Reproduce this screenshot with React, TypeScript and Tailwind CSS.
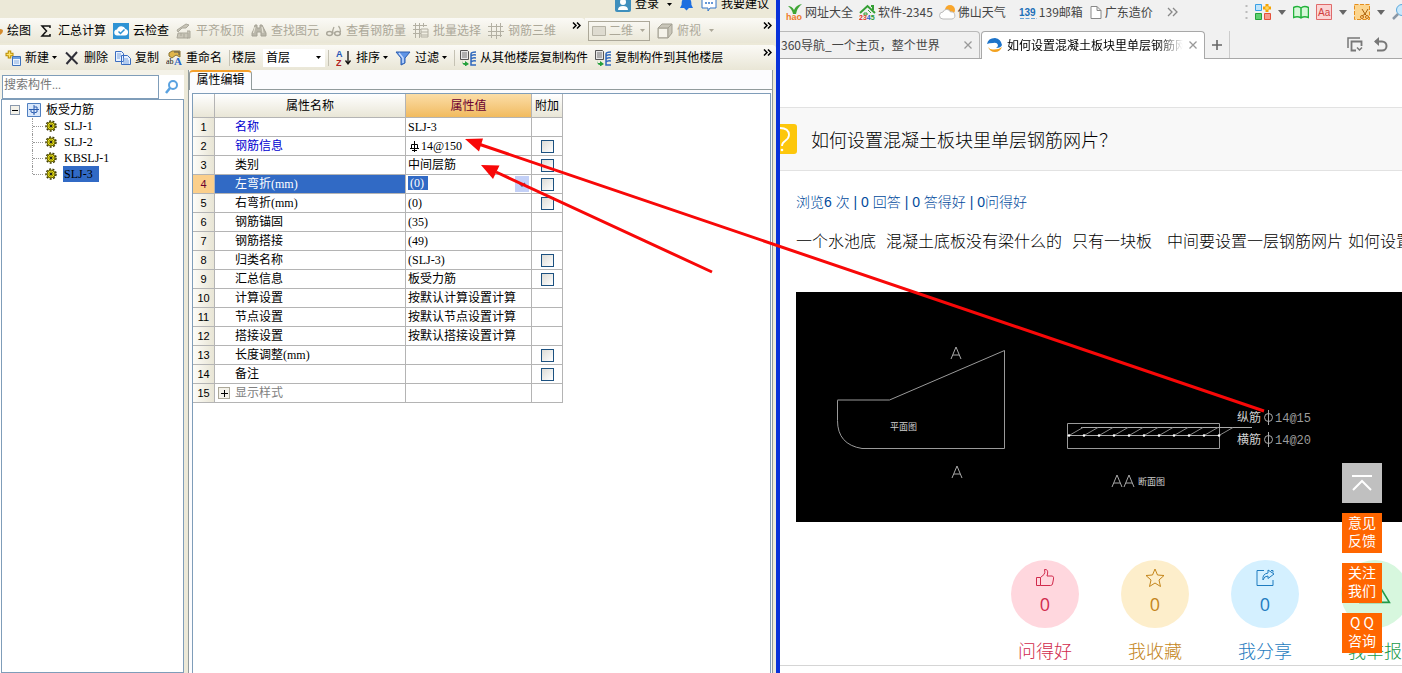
import type { ReactNode } from "react"
import { clsx } from "clsx"

type IconProps = { children: ReactNode; className?: string; box?: string }

/** 16px icon frame shared by all toolbar drawings. */
function Icon({ children, className, box = "0 0 16 16" }: IconProps) {
  return (
    <svg viewBox={box} className={clsx("shrink-0", className ?? "size-4")} fill="none" aria-hidden="true">
      {children}
    </svg>
  )
}

function Caret({ className }: { className?: string }) {
  return (
    <Icon box="0 0 5 3" className={className ?? "h-[3px] w-[5px]"}>
      <path d="M0 0h5L2.500 3z" fill="currentColor" />
    </Icon>
  )
}

const icons = {
  sigma: (
    <Icon>
      <path d="M12 5V3H4l4.500 5L4 13h8v-2" stroke="#111" strokeWidth="1.500" />
    </Icon>
  ),
  cloud: (
    <Icon>
      <path d="M0 0h16v16H0z" fill="#2e93d4" />
      <path d="M4.500 12.500a3 3 0 0 1-.5-6 4.500 4.500 0 0 1 8.500-.5 3.300 3.300 0 0 1-.5 6.500z" fill="#fff" />
      <path d="m5.500 8.500 2 2 4-4" stroke="#2e93d4" strokeWidth="1.500" />
    </Icon>
  ),
  slab: (
    <Icon>
      <path d="m1 7 9-6 3 1-3 3H6L2 9zM2 10h10v5H1zM5 10v3M8 11v4M11 8h3v7h-3" fill="#c9c6b8" stroke="#aaa79a" />
    </Icon>
  ),
  binoculars: (
    <Icon>
      <path d="M4 2h2v3h3V2h2l2 4 2 4v3h-5V9H6v4H1v-3l2-4z" fill="#bab7aa" stroke="#a5a295" />
      <path d="M4 4 2.500 10M11 4l1 6" stroke="#ece9dc" />
    </Icon>
  ),
  glasses: (
    <Icon>
      <path d="M6.500 10q0-3 1.500-6M14.500 9q0-4-2-6" stroke="#aaa79a" strokeWidth="1.300" />
      <ellipse cx="3.500" cy="10.500" rx="2.800" ry="2" stroke="#aaa79a" strokeWidth="1.500" />
      <ellipse cx="11.500" cy="10.500" rx="2.800" ry="2" stroke="#aaa79a" strokeWidth="1.500" />
      <path d="M6.500 10h2" stroke="#aaa79a" />
    </Icon>
  ),
  batch: (
    <Icon>
      <path d="M0 2.500h14M0 6.500h8M0 10.500h8M2.500 0v15M6.500 0v15M10.500 0v4M8 6h7v8H8zM8 9h7M8 12h7" stroke="#b3b0a3" />
    </Icon>
  ),
  mesh: (
    <Icon>
      <path d="M0 3.500h15M0 8.500h16M0 12.500h14M3.500 0v15M8.500 1v15M12.500 0v14" stroke="#b3b0a3" />
    </Icon>
  ),
  cube: (
    <Icon>
      <path d="m1 5 4-4h10v9l-4 5H1z" fill="#c9c6b9" stroke="#a29f92" />
      <path d="M1 5h10v10M11 5l4-4" stroke="#a29f92" />
      <path d="M2 6h8v8H2z" fill="#f5f3ea" />
    </Icon>
  ),
  create: (
    <Icon>
      <path d="M4.500.5v8M.5 4.500h8" stroke="#b78a00" strokeWidth="3.500" />
      <path d="M4.500 1.500v6M1.500 4.500h6" stroke="#ffe36a" strokeWidth="1.500" />
      <path d="M7.500 6.500h8v9h-8z" fill="#eaf3ff" stroke="#3d72bd" />
      <path d="M8 7h7v2H8z" fill="#6d9fe0" />
      <path d="M9 11h5M9 13h5" stroke="#8aaede" />
    </Icon>
  ),
  remove: (
    <Icon>
      <path d="M2 2.500 13.500 14M13 2 2.500 14" stroke="#2f2f38" strokeWidth="2" />
    </Icon>
  ),
  copy: (
    <Icon>
      <path d="M.5 1.500h6l2 2v8h-8zM6.500 5.500h6l3 3v6h-9z" fill="#e8f1ff" stroke="#3a6dc0" />
      <path d="M2 4h4M2 6h4M2 8h3M8 9h5M8 11h6M8 13h6" stroke="#7aa3dc" />
    </Icon>
  ),
  rename: (
    <Icon>
      <path d="m3 3 3-2h8v6l-4-2-4 3-3-2z" fill="#e0b54a" stroke="#8a7434" />
      <path d="M8 2h5v3" stroke="#555" />
      <text x="0" y="14" fontSize="8" fill="#111" className="font-['Liberation_Serif',serif]">ab</text>
      <text x="8" y="15" fontSize="11" fontWeight="700" fill="#2a66c8" className="font-['Liberation_Serif',serif]">A</text>
    </Icon>
  ),
  sort: (
    <Icon>
      <text x="0" y="7" fontSize="9" fontWeight="700" fill="#2456b8" className="font-['Liberation_Sans',sans-serif]">A</text>
      <text x="0" y="16" fontSize="9" fontWeight="700" fill="#b02222" className="font-['Liberation_Sans',sans-serif]">Z</text>
      <path d="M12 1v12M9.500 10.500 12 14l2.500-3.500" stroke="#111" strokeWidth="1.300" />
    </Icon>
  ),
  filter: (
    <Icon>
      <path d="M1 2h14L10 8v5l-4 2V8z" fill="#5f94e6" stroke="#2c5dae" />
      <path d="m4 3 4 5v5" stroke="#c7dcff" strokeWidth="1.500" />
    </Icon>
  ),
  transfer: (
    <Icon>
      <path d="M.5.5h7l1 1v8h-8z" fill="#e6e6e6" stroke="#555" />
      <path d="M2 3h5M2 5h5M2 7h5" stroke="#777" />
      <path d="M16 2q-5 0-5 2v11h5M11 6q2-2 5-1M11 9q2-2 5-1M11 12q2-2 5-1" stroke="#2f68bd" strokeWidth="1.500" />
      <path d="M2 10v3h3v-2l4 3-4 2.500V15q-3 0-3-5" fill="#24a03c" />
    </Icon>
  ),
}

type Tool = { label: string; icon?: ReactNode; disabled?: boolean; menu?: boolean }

const viewTools: Tool[] = [
  { label: "汇总计算", icon: icons.sigma },
  { label: "云检查", icon: icons.cloud },
  { label: "平齐板顶", icon: icons.slab, disabled: true },
  { label: "查找图元", icon: icons.binoculars, disabled: true },
  { label: "查看钢筋量", icon: icons.glasses, disabled: true },
  { label: "批量选择", icon: icons.batch, disabled: true },
  { label: "钢筋三维", icon: icons.mesh, disabled: true },
]

const editTools: Tool[] = [
  { label: "新建", icon: icons.create, menu: true },
  { label: "删除", icon: icons.remove },
  { label: "复制", icon: icons.copy },
  { label: "重命名", icon: icons.rename },
]

function ToolButton({ label, icon, disabled, menu }: Tool) {
  return (
    <button
      type="button"
      disabled={disabled}
      className="flex shrink-0 items-center gap-[3px] whitespace-nowrap disabled:text-[#aca899]"
    >
      <span className="flex items-center gap-1">
        {icon}
        {label}
      </span>
      {menu && <Caret />}
    </button>
  )
}

function Separator() {
  return <span className="h-4 w-px shrink-0 bg-[#c5c2b4]" />
}

function MoreButton() {
  return (
    <button type="button" aria-label="更多" className="mr-1 ml-auto self-start pt-1">
      <Icon box="0 0 9 7" className="h-[7px] w-[9px]">
        <path d="m1 .5 3 3-3 3M5 .5l3 3-3 3" stroke="#000" strokeWidth="1.500" />
      </Icon>
    </button>
  )
}

const bar = "flex items-center gap-[7px] rounded-r bg-linear-to-b from-[#fbfaf6] to-[#e9e6d6]"

function Toolbars() {
  return (
    <div className="flex flex-col gap-0.5">
      <div className="h-4 overflow-hidden">
        <div className="-mt-3 flex h-8 items-center justify-end gap-2 pr-[7px]">
          <button type="button" className="flex items-center gap-1">
            <Icon>
              <rect width="16" height="16" rx="2" fill="#3f8fbd" />
              <circle cx="8" cy="6" r="3" fill="#fff" />
              <path d="M3 14q0-4 5-4t5 4z" fill="#fff" />
            </Icon>
            登录
          </button>
          <Caret />
          <Icon className="h-4 w-[13px]">
            <path d="M8 0q6 1 6 7v2l2 4H0l2-4V7q0-6 6-7" fill="#1d6fe0" />
            <path d="M5 13h6l-3 3z" fill="#1d6fe0" />
          </Icon>
          <button type="button" className="flex items-center gap-1">
            <Icon>
              <path d="M1 2h14v10H9l-2 3v-3H1z" fill="#fff" stroke="#3577c9" />
              <path d="M4 7h2M7 7h2M10 7h2" stroke="#3577c9" strokeWidth="1.500" />
            </Icon>
            我要建议
          </button>
        </div>
      </div>

      <div className="flex h-[25px]">
        <div className={clsx(bar, "w-[585px] shrink-0")}>
          <button type="button" className="flex shrink-0 items-center gap-1">
            <Icon box="0 0 3 16" className="h-4 w-[3px]">
              <path d="M0 6q3 0 3 2t-3 4" fill="#d48a2c" />
            </Icon>
            绘图
          </button>
          {viewTools.map((t) => (
            <ToolButton key={t.label} {...t} />
          ))}
          <MoreButton />
        </div>
        <div className={clsx(bar, "min-w-0 flex-1 gap-1 pl-[3px]")}>
          <div className="relative flex h-5 w-[62px] items-center border border-[#aca899] pl-0.5">
            <Icon>
              <path d="M1.500 3.500h13v9h-13z" fill="#dedbd0" stroke="#b5b2a5" />
            </Icon>
            <select aria-label="视图" disabled className="w-full appearance-none pl-0.5 text-[#aca899]">
              <option>二维</option>
            </select>
            <Caret className="pointer-events-none absolute right-1 h-[3px] w-[5px] text-[#aca899]" />
          </div>
          <button type="button" disabled className="flex items-center gap-1 text-[#aca899]">
            {icons.cube}
            俯视
            <Caret className="ml-1 h-[3px] w-[5px]" />
          </button>
          <MoreButton />
        </div>
      </div>

      <div className={clsx(bar, "h-[25px] pl-[5px]")}>
        {editTools.map((t) => (
          <ToolButton key={t.label} {...t} />
        ))}
        <div className="flex shrink-0 items-center gap-0.5">
          <Separator />
          <label htmlFor="floor">楼层</label>
        </div>
        <div className="flex shrink-0 items-center gap-[3px]">
          <div className="relative flex h-[18px] w-[62px] items-center bg-white">
            <select id="floor" className="h-full w-full appearance-none pl-[3px]">
              <option>首层</option>
            </select>
            <Caret className="pointer-events-none absolute right-1 h-[3px] w-[5px]" />
          </div>
          <Separator />
        </div>
        <ToolButton label="排序" icon={icons.sort} menu />
        <ToolButton label="过滤" icon={icons.filter} menu />
        <div className="flex shrink-0 items-center gap-[5px]">
          <Separator />
          <ToolButton label="从其他楼层复制构件" icon={icons.transfer} />
        </div>
        <ToolButton label="复制构件到其他楼层" icon={icons.transfer} />
        <MoreButton />
      </div>
    </div>
  )
}

const members = ["SLJ-1", "SLJ-2", "KBSLJ-1", "SLJ-3"]

function MemberTree() {
  return (
    <aside className="flex w-[184px] shrink-0 flex-col bg-white">
      <div className="flex h-[29px] items-end bg-[#f4f2e8] pl-0.5">
        <input
          aria-label="搜索构件"
          placeholder="搜索构件..."
          className="h-6 w-[157px] border border-[#7f9db9] bg-white px-px pb-1 placeholder:text-[#777]"
        />
        <button type="button" aria-label="搜索" className="flex h-6 flex-1 items-center justify-center bg-white">
          <Icon>
            <circle cx="9" cy="6" r="4" stroke="#5aa2e0" strokeWidth="2" />
            <path d="m6 9-4 5" stroke="#5aa2e0" strokeWidth="2.500" />
          </Icon>
        </button>
      </div>
      <div className="ml-px flex-1 border border-[#7f9db9] pt-0.5 pl-2 leading-4">
        <div className="flex items-center">
          <button type="button" aria-label="折叠" className="mr-1.5 flex size-2.5 items-center justify-center border border-[#8a99ad] bg-[#f4f2ea]">
            <span className="h-px w-1.5 bg-black" />
          </button>
          <Icon>
            <path d="M1.500 1.500h13v13h-13z" fill="#d9e8fc" stroke="#4f7fc0" />
            <path d="M3 7.500h10M8 3v10M5 7v3q3 2 6 0V5H8" stroke="#2a5db0" />
          </Icon>
          <span className="pl-1">板受力筋</span>
        </div>
        <ul className="ml-[22px] flex flex-col">
          {members.map((m, i) => (
            <li key={m} className="flex h-4 items-center">
              <span className={clsx("w-0 self-start border-l border-dotted border-[#999]", i === members.length - 1 ? "h-2" : "h-4")} />
              <span className="w-2.5 border-t border-dotted border-[#999]" />
              <Icon box="0 0 12 12" className="ml-0.5 size-3">
                <circle cx="6" cy="6" r="5" stroke="#3c3a00" strokeWidth="1.500" strokeDasharray="2 1.500" />
                <circle cx="6" cy="6" r="4" fill="#ece31c" stroke="#6a6400" />
                <path d="M6 2v8M2 6h8M3 3l6 6M9 3 3 9" stroke="#6a6400" strokeWidth=".7" />
                <circle cx="6" cy="6" r="1.200" fill="#222" />
              </Icon>
              <span className={clsx("ml-1.5 pr-1.5 pl-px", m === "SLJ-3" && "bg-[#316ac5]")}>{m}</span>
            </li>
          ))}
        </ul>
      </div>
    </aside>
  )
}

type Property = { name: string; value?: ReactNode; check?: boolean; tone?: string }

const properties: Property[] = [
  { name: "名称", value: "SLJ-3", tone: "text-[#0000d0]" },
  {
    name: "钢筋信息",
    value: (
      <span className="flex items-center gap-0.5 pl-0.5">
        <Icon box="0 0 9 11" className="h-[11px] w-[9px]">
          <path d="M4.500 0v11M1.500 3.500h6v4h-6zM0 7.500h9M2 9.500h5" stroke="#000" />
        </Icon>
        14@150
      </span>
    ),
    check: true,
    tone: "text-[#0000d0]",
  },
  { name: "类别", value: "中间层筋", check: true },
  { name: "左弯折(mm)", check: true },
  { name: "右弯折(mm)", value: "(0)", check: true },
  { name: "钢筋锚固", value: "(35)" },
  { name: "钢筋搭接", value: "(49)" },
  { name: "归类名称", value: "(SLJ-3)", check: true },
  { name: "汇总信息", value: "板受力筋", check: true },
  { name: "计算设置", value: "按默认计算设置计算" },
  { name: "节点设置", value: "按默认节点设置计算" },
  { name: "搭接设置", value: "按默认搭接设置计算" },
  { name: "长度调整(mm)", check: true },
  { name: "备注", check: true },
  { name: "显示样式", tone: "text-[#808080]" },
]

function PropertyTable() {
  return (
    <table className="w-[370px] table-fixed border-separate border-spacing-0">
      <colgroup>
        <col className="w-[22px]" />
        <col className="w-[191px]" />
        <col className="w-[126px]" />
        <col className="w-[31px]" />
      </colgroup>
      <thead>
        <tr className="h-6 bg-linear-to-b from-white to-[#e8e5d5] [&>th]:border-r [&>th]:border-b [&>th]:border-[#b4b4b4] [&>th]:p-0 [&>th]:font-normal">
          <th aria-label="序号" />
          <th>属性名称</th>
          <th className="bg-linear-to-b from-[#fbdda6] to-[#f1bb5e] text-[#6b0030]">属性值</th>
          <th>附加</th>
        </tr>
      </thead>
      <tbody>
        {properties.map((p, i) => {
          const active = i === 3
          return (
            <tr key={p.name} className="h-[19px] leading-[18px] [&>*]:border-r [&>*]:border-b [&>*]:border-[#b4b4b4] [&>*]:p-0">
              <th
                className={clsx(
                  "font-['Liberation_Sans',sans-serif] text-[11px] font-normal",
                  active ? "bg-[#fbcf8b] text-[#6b0030]" : "bg-linear-to-r from-[#fdfcf8] to-[#e8e5d5]",
                )}
              >
                {i + 1}
              </th>
              <td className={clsx(active ? "bg-[#316ac5] text-white" : p.tone)}>
                <div className="flex items-center">
                  <span className="flex w-5 shrink-0 pl-[3px]">
                    {i === 14 && (
                      <button type="button" aria-label="展开" className="flex size-3 items-center justify-center border border-[#aca899] bg-[#f4f2ea]">
                        <Icon box="0 0 7 7" className="size-[7px]">
                          <path d="M3.500 0v7M0 3.500h7" stroke="#000" />
                        </Icon>
                      </button>
                    )}
                  </span>
                  {p.name}
                </div>
              </td>
              <td>
                {active ? (
                  <div className="flex h-[18px] items-start justify-between pt-px pr-0.5 pl-0.5">
                    <input aria-label={p.name} defaultValue="(0)" className="h-3.5 w-5 bg-[#316ac5] pl-0.5 text-white" />
                    <button type="button" aria-label="选择" className="flex h-4 w-3.5 items-center justify-center bg-[#c3d0f7]">
                      <Icon box="0 0 8 5" className="h-[5px] w-2">
                        <path d="m1 1 3 3 3-3" stroke="#4d6185" strokeWidth="1.500" />
                      </Icon>
                    </button>
                  </div>
                ) : (
                  <div className="pl-0.5">{p.value}</div>
                )}
              </td>
              <td>
                {p.check && (
                  <input
                    type="checkbox"
                    aria-label={`${p.name} 附加`}
                    className="mx-auto block size-[13px] appearance-none border border-[#1c5180] bg-linear-to-br from-[#dcdcd7] to-white"
                  />
                )}
              </td>
            </tr>
          )
        })}
      </tbody>
    </table>
  )
}

function ModelingApp() {
  return (
    <section className="flex min-w-0 flex-col border-r-4 border-[#0831d9] bg-[#ece9d8] font-['Liberation_Serif','Noto_Sans_CJK_SC',serif] text-xs text-black">
      <Toolbars />
      <div className="flex min-h-0 flex-1">
        <MemberTree />
        <div className="ml-1 flex min-w-0 flex-1 flex-col border-x border-[#919b9c] bg-[#fcfcfe]">
          <div className="flex h-5 border-b border-[#919b9c]">
            <button type="button" className="-mb-px h-5 w-[63px] rounded-t border-x border-t-2 border-[#919b9c] border-t-[#f5a02c] bg-[#fcfcfe] pb-0.5">
              属性编辑
            </button>
          </div>
          <div className="mt-[3px] mr-px ml-[3px] min-h-0 flex-1 overflow-hidden border-x border-t border-[#7f9db9] bg-white">
            <PropertyTable />
          </div>
        </div>
        <span className="w-[3px] bg-[#ece9d8]" />
      </div>
    </section>
  )
}

function Bookmark({ icon, label }: { icon: ReactNode; label: string }) {
  return (
    <a href="#" className="flex shrink-0 items-center gap-0.5 whitespace-nowrap">
      {icon}
      {label}
    </a>
  )
}

function BookmarkBar() {
  return (
    <nav className="flex h-[31px] items-center overflow-hidden pb-[7px] pl-1.5">
      <div className="flex items-center gap-1.5">
        <Bookmark
          label="网址大全"
          icon={
            <Icon box="0 0 17 17" className="size-[17px]">
              <path d="M2 2q4 0 6 4 2-5 8-6-5 4-6 10H7Q6 5 2 2" fill="#3fa535" />
              <text x="0" y="16" fontSize="9" fontWeight="700" fill="#f07a2a" className="font-['Liberation_Sans',sans-serif]">hao</text>
            </Icon>
          }
        />
        <Bookmark
          label="软件-2345"
          icon={
            <Icon box="0 0 17 17" className="size-[17px]">
              <path d="m1 9 7.500-7L16 9M12 2h2v4" stroke="#35a035" strokeWidth="2" />
              <path d="M5 9h3v2H5zM9 6l3 3" stroke="#35a035" />
              <text x="0" y="16" fontSize="7" fontWeight="700" className="font-['Liberation_Sans',sans-serif]">
                <tspan fill="#e02a1c">2</tspan>
                <tspan fill="#d9482a">3</tspan>
                <tspan fill="#2463c9">4</tspan>
                <tspan fill="#259a35">5</tspan>
              </text>
            </Icon>
          }
        />
        <Bookmark
          label="佛山天气"
          icon={
            <Icon box="0 0 17 17" className="size-[17px]">
              <circle cx="11" cy="6" r="5" fill="#f9a62b" />
              <path d="M4 15a3.500 3.500 0 0 1 0-7 4 4 0 0 1 7.500 0A3.500 3.500 0 0 1 13 15z" fill="#fff" stroke="#bbb" />
            </Icon>
          }
        />
        <span className="w-px" />
        <Bookmark
          label="139邮箱"
          icon={
            <Icon box="0 0 18 16" className="h-4 w-[18px]">
              <text x="0" y="12" fontSize="10" fontWeight="700" fill="#1b6fb8" className="font-['Liberation_Sans',sans-serif]">139</text>
              <path d="M1 14.500h17" stroke="#6aa3d4" strokeDasharray="4 1.500" />
            </Icon>
          }
        />
        <Bookmark
          label="广东造价"
          icon={
            <Icon className="mx-px h-4 w-3" box="0 0 12 16">
              <path d="M1 2.500h6l4 4v8H1zM7 2.500v4h4" fill="#fff" stroke="#888" />
            </Icon>
          }
        />
        <button type="button" aria-label="更多书签" className="ml-2">
          <Icon box="0 0 12 10" className="h-2.5 w-3">
            <path d="m1 1 4 4-4 4M6 1l4 4-4 4" stroke="#888" strokeWidth="1.300" />
          </Icon>
        </button>
      </div>

      <div className="-mr-1.5 ml-auto flex shrink-0 items-center gap-[7px] text-[#666]">
        <Icon box="0 0 3 14" className="h-3.5 w-[3px]">
          <path d="M1.500 0v14" stroke="#bbb" strokeWidth="2" strokeDasharray="2 4" />
        </Icon>
        <Icon>
          <path d="M.5.500h6v6h-6z" fill="#bfe4fb" stroke="#3aa1e6" />
          <path d="M.5 9.500h6v6h-6z" fill="#5fcf70" stroke="#26a23a" />
          <path d="M9.500 9.500h6v6h-6z" fill="#f79a8b" stroke="#e4503a" />
          <path d="M12 0v8M8 4h8" stroke="#f5a300" strokeWidth="3" />
          <path d="M12 2v4M10 4h4" stroke="#ffe680" />
        </Icon>
        <Caret className="h-[5px] w-2" />
        <Icon>
          <path d="M.5 3.500Q5 1.500 8 4q3-2.500 7.500-.5v10Q11 12 8 14q-3-2-7.500-.5zM8 4v10" fill="#d6f7d8" stroke="#22b33b" strokeWidth="1.500" />
        </Icon>
        <Icon>
          <path d="M.5.500h15v15H.5z" fill="#fbd5d5" stroke="#e06a6a" />
          <text x="2" y="12" fontSize="10" fill="#d03c3c" className="font-['Liberation_Sans',sans-serif]">Aa</text>
        </Icon>
        <Caret className="h-[5px] w-2" />
        <Icon>
          <path d="M.5.500h15v15H.5z" fill="#fcd58e" stroke="#e58e1b" strokeDasharray="4 1.500" />
          <path d="m8 5 3 5M14 5l-3 5M11 10l-3 2M11 10l2 2" stroke="#a85f0a" />
          <circle cx="8" cy="13" r="1.500" stroke="#c26d0c" />
          <circle cx="13" cy="13" r="1.500" stroke="#c26d0c" />
        </Icon>
        <Caret className="h-[5px] w-2" />
        <Icon>
          <circle cx="10" cy="6" r="5.500" fill="#c9e8fb" stroke="#5aa9dd" />
          <path d="m6 10-5 5" stroke="#8a97a5" strokeWidth="2.500" />
        </Icon>
      </div>
    </nav>
  )
}

function CloseIcon() {
  return (
    <Icon box="0 0 8 8" className="size-2">
      <path d="m.5.500 7 7M7.500.500l-7 7" stroke="#999" strokeWidth="1.300" />
    </Icon>
  )
}

function TabStrip() {
  return (
    <div className="flex h-7 border-b border-[#a8a8a8]">
      <div className="flex w-[200px] items-center justify-between rounded-tr border-t border-r border-[#b9b9b9] bg-[#f0f0f0] pr-[7px] pl-px whitespace-nowrap">
        360导航_一个主页，整个世界
        <button type="button" aria-label="关闭"><CloseIcon /></button>
      </div>
      <div className="-mb-px ml-px flex w-56 items-center gap-1 rounded-t border-x border-t border-[#a8a8a8] bg-white px-[5px] pb-0.5 text-black">
        <Icon>
          <path d="M0 7q1-6 8-6 6 1 7 7-1 3-6 3 2-1 2-3-1-3-5-2Q2 6 0 7" fill="#1d73c9" />
          <path d="M1 10q2 3 6 2.500 5 0 8-2.500-2 5-7 5t-7-5" fill="#f3a21f" />
        </Icon>
        <span className="min-w-0 flex-1 overflow-hidden mask-r-from-85% whitespace-nowrap">如何设置混凝土板块里单层钢筋网片</span>
        <button type="button" aria-label="关闭" className="mx-0.5"><CloseIcon /></button>
      </div>
      <button type="button" aria-label="新标签页" className="flex w-[25px] items-center justify-center border-r border-[#ccc]">
        <Icon box="0 0 10 10" className="size-2.5">
          <path d="M5 0v10M0 5h10" stroke="#666" strokeWidth="1.600" />
        </Icon>
      </button>
      <div className="ml-auto flex items-center gap-2.5 pr-[13px]">
        <Icon>
          <path d="M1 11V1h12" stroke="#777" strokeWidth="1.500" />
          <path d="M9 13.500H4.500v-9h10V9" stroke="#777" strokeWidth="1.800" />
          <path d="m10 10.500 2.500 2.500 2.500-2.500" stroke="#777" strokeWidth="1.500" />
        </Icon>
        <Icon>
          <path d="M2 4.500h7a4.500 4.500 0 0 1 0 9H4" stroke="#777" strokeWidth="2" />
          <path d="M6 0v9L1 4.500z" fill="#777" />
        </Icon>
      </div>
    </div>
  )
}

const rebarX = [0, 1, 2, 3, 4, 5, 6, 7, 8, 9, 10].map((n) => 273 + n * 15)

/** CAD sketch: slab outline on the left, section A-A on the right. */
function SlabDrawing() {
  return (
    <div className="mt-10 h-[230px] overflow-hidden bg-black">
      <svg viewBox="0 0 606 230" className="h-full w-[606px] max-w-none font-['Noto_Sans_CJK_SC',sans-serif]" fill="none" role="img" aria-label="平面图">
        <path d="M41.500 108.500v-.5h52L208.500 58.500v98H66q-24.500-4-24.500-28z" stroke="#9a9a9a" />
        <path d="m155 67 5-12 5 12M157 63h6M156 186l5-12 5 12M158 182h6" stroke="#aaa" />
        <path d="M271.500 131.500h152v25h-152z" stroke="#9a9a9a" />
        <path d="M271 143.500h152M285 135.500h171" stroke="#aaa" />
        {rebarX.map((x) => (
          <g key={x}>
            <path d={`M${x} 143.500 ${x + 14} 135.500`} stroke="#888" />
            <circle cx={x} cy="143.500" r="1.300" fill="#fff" />
          </g>
        ))}
        <path d="m316 195 5-12 5 12M318 191h6M328 195l5-12 5 12M330 191h6" stroke="#aaa" />
        <g fill="#d0d0d0">
          <text x="94" y="138" fontSize="9">平面图</text>
          <text x="342" y="193" fontSize="9">断面图</text>
          <text x="441" y="130" fontSize="12">纵筋</text>
          <text x="441" y="152" fontSize="12">横筋</text>
        </g>
        <path d="M472.500 118v15M472.500 140v15" stroke="#aaa" />
        <ellipse cx="472.500" cy="125.500" rx="4" ry="4" stroke="#aaa" />
        <ellipse cx="472.500" cy="147.500" rx="4" ry="4" stroke="#aaa" />
        <g fill="#9c9c9c" fontSize="12" className="font-['Liberation_Mono',monospace]">
          <text x="479" y="130">14@15</text>
          <text x="479" y="152">14@20</text>
        </g>
      </svg>
    </div>
  )
}

type Action = { label: string; count?: number; circle: string; text: string; path: string }

const actions: Action[] = [
  {
    label: "问得好",
    count: 0,
    circle: "bg-[#ffd7de]",
    text: "text-[#d12a4c]",
    path: "M1.500 9.500h4v8h-4zM5.500 9.500 9 6.500q1.500-2 .5-5 4-.5 3 4.500l-.5 2h5.500q1.500 1 1 3l-1 5q-.5 1.500-2 1.500h-10",
  },
  {
    label: "我收藏",
    count: 0,
    circle: "bg-[#fdeecb]",
    text: "text-[#c4851a]",
    path: "m10 1 2.500 6 6.500.5-5 4.500 1.500 6.500L10 15l-5.500 3.500L6 12 1 7.500 7.500 7z",
  },
  {
    label: "我分享",
    count: 0,
    circle: "bg-[#d4f0ff]",
    text: "text-[#1f7cc0]",
    path: "M9 2.500H2v15h16V12M8 12q-1-6 5-7V2l6 4-6 4.500V8q-4 0-5 4M16 2.500h2v2",
  },
  { label: "我举报", circle: "bg-[#d7f7de]", text: "text-[#219a48]", path: "M9 2.500 19 19H0z" },
]

function Browser() {
  return (
    <section className="min-w-0 overflow-hidden bg-[#f1f1f1] font-['Noto_Sans_CJK_SC',sans-serif] text-xs text-[#444]">
      <BookmarkBar />
      <TabStrip />
      <main className="bg-white pt-12">
        <header className="flex h-16 items-center gap-3.5 border-y border-[#e2e2e2] bg-[#f8f8f8]">
          <Icon box="0 0 17 30" className="h-[30px] w-[17px]">
            <path d="M0 0h14q3 0 3 3v24q0 3-3 3H0z" fill="#fdc70c" />
            <path d="M0 4q9 0 9 7 0 3-4 6-3 2-3 5" stroke="#fff" strokeWidth="1.800" />
            <circle cx="2" cy="26" r="1.300" fill="#fff" />
          </Icon>
          <h1 className="text-lg font-light whitespace-nowrap text-black">如何设置混凝土板块里单层钢筋网片？</h1>
        </header>
        <article className="pt-[21px] pl-4">
          <p className="font-['Liberation_Sans','Noto_Sans_CJK_SC',sans-serif] text-sm leading-5 font-light whitespace-nowrap text-[#004a9c]">
            浏览6 次 | 0 回答 | 0 答得好 | 0问得好
          </p>
          <p className="mt-4 flex text-base leading-6 font-light whitespace-nowrap text-black">
            <span className="mr-2.5">一个水池底</span>
            <span className="mr-2.5">混凝土底板没有梁什么的</span>
            <span className="mr-[15px]">只有一块板</span>
            <span className="mr-[5px]">中间要设置一层钢筋网片</span>
            <span>如何设置</span>
          </p>
          <SlabDrawing />
        </article>
        <div className="mt-[38px] flex justify-end border-b border-[#d5d5d5] pb-[3px]">
          <div className="-mr-7 flex shrink-0">
            {actions.map((a) => (
              <button key={a.label} type="button" className={clsx("flex w-[110px] flex-col items-center gap-2.5 font-light", a.text)}>
                <span className={clsx("flex size-[68px] flex-col items-center rounded-full", a.circle, a.count === undefined ? "pt-3" : "pt-2")}>
                  <Icon box="0 0 20 20" className={a.count === undefined ? "size-8" : "size-5"}>
                    <path d={a.path} stroke="currentColor" />
                  </Icon>
                  {a.count !== undefined && (
                    <span className="font-['Open_Sans',sans-serif] text-lg leading-8 font-normal">{a.count}</span>
                  )}
                </span>
                <span className="text-lg leading-6">{a.label}</span>
              </button>
            ))}
          </div>
        </div>
        <div className="h-2" />
      </main>
    </section>
  )
}

function FloatingMenu() {
  return (
    <div className="absolute right-5 bottom-5 flex w-10 flex-col gap-2.5 font-['Noto_Sans_CJK_SC',sans-serif] text-sm leading-[18px] text-white">
      <button type="button" aria-label="返回顶部" className="flex h-10 items-center justify-center bg-[#c0c0c0]">
        <Icon box="0 0 20 16" className="h-4 w-5">
          <path d="M0 1h20M1 15l9-9 9 9" stroke="#fff" strokeWidth="2" />
        </Icon>
      </button>
      {[["意见", "反馈"], ["关注", "我们"], ["Q Q", "咨询"]].map(([top, bottom]) => (
        <button key={bottom} type="button" className="flex h-10 flex-col items-center bg-[#ff6600]">
          <span>{top}</span>
          <span>{bottom}</span>
        </button>
      ))}
    </div>
  )
}

export default function App() {
  return (
    <div lang="zh-CN" className="relative grid h-screen grid-cols-[minmax(0,780fr)_minmax(0,622fr)] overflow-hidden">
      <ModelingApp />
      <Browser />
      <FloatingMenu />

      {/* Red pointers from the drawing notes to the property values */}
      <svg className="pointer-events-none absolute top-0 left-0" width="1402" height="673" aria-hidden="true">
        <path d="M480 144.500 1264 411M496 172l216 100" stroke="#f80808" strokeWidth="3" fill="none" />
        <path d="m465 139 18-.5-4 13zM481 165l18.500.5-6.500 13.500z" fill="#f80808" />
      </svg>
    </div>
  )
}
